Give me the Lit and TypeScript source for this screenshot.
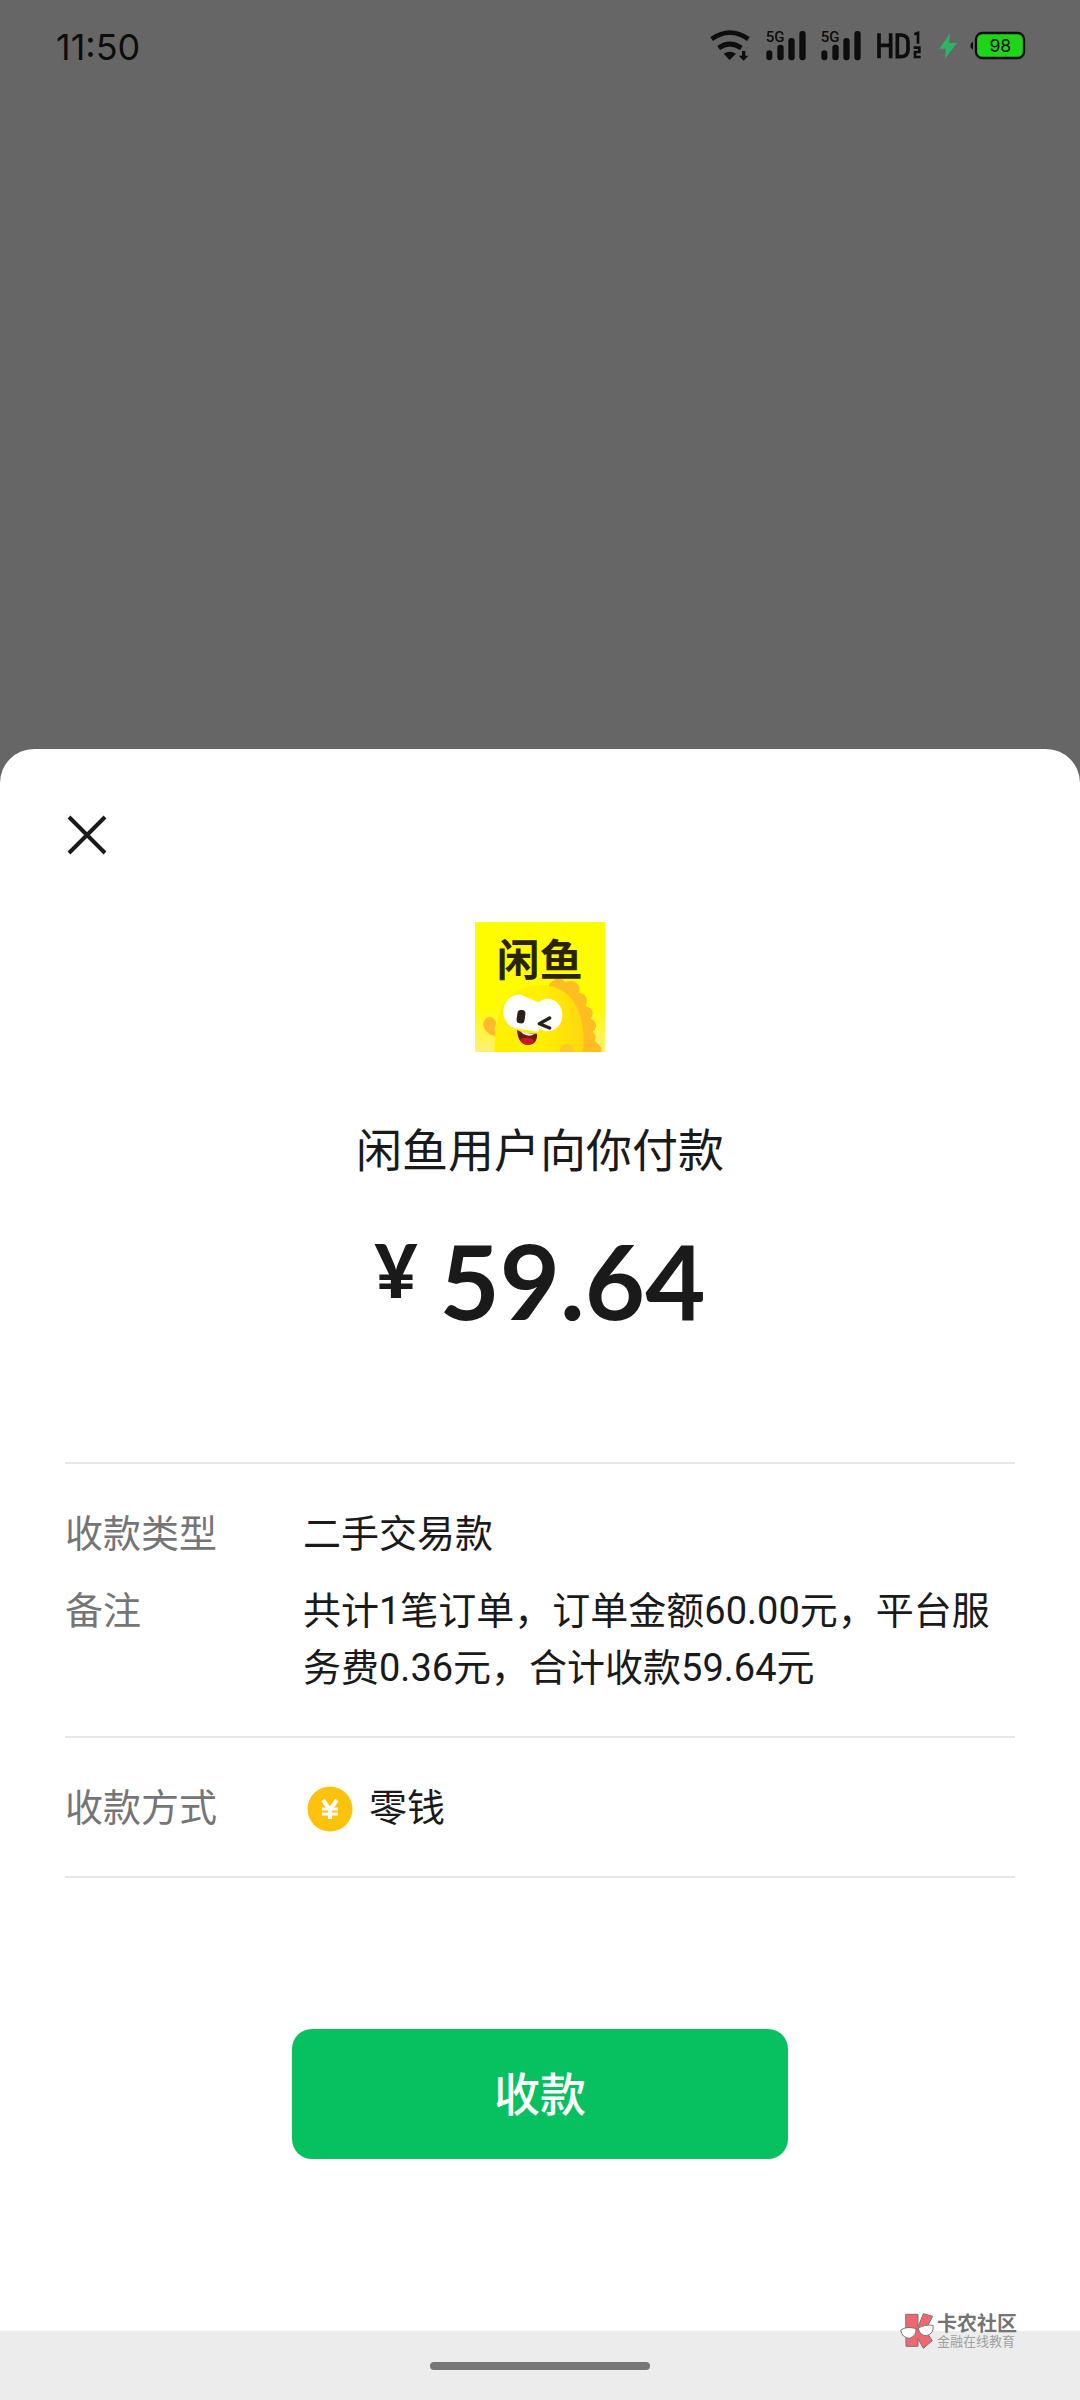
import { LitElement, html, css, svg } from "lit";
import { customElement, property } from "lit/decorators.js";

@customElement("status-bar")
class StatusBar extends LitElement {
  static styles = css`
    :host {
      display: flex;
      align-items: center;
      justify-content: space-between;
      height: 92px;
      padding: 0 54px 0 56px;
      color: #0d0d0d;
    }
    .time {
      padding-top: 2px;
      font: 400 36px/44px Inter, sans-serif;
    }
    .icons {
      display: flex;
      align-items: center;
      gap: 14px;
    }
    svg {
      display: block;
      height: 32px;
      fill: currentColor;
      overflow: visible;
    }
    .wifi { width: 42px; }
    .signal { width: 41px; }
    .hd { width: 48px; }
    .bolt { width: 18px; fill: #2fb465; }
    .battery { width: 56px; }
    .stroke { fill: none; stroke: currentColor; }
    .charge { fill: #1fd51a; stroke: #0d0d0d; }
    .label { font-family: Roboto, sans-serif; font-weight: 500; }
    .level { font-family: Inter, sans-serif; font-weight: 400; }
  `;

  private signal() {
    return html`<svg class="signal" viewBox="225 45 123 96" role="img" aria-label="5G">
      ${svg`<text class="label" x="224" y="81" font-size="45">5G</text>
      <rect x="226" y="106" width="18" height="30" rx="9"/>
      <rect x="259" y="89" width="19" height="47" rx="9"/>
      <rect x="292" y="69" width="19" height="67" rx="9"/>
      <rect x="325" y="48" width="19" height="88" rx="9"/>`}
    </svg>`;
  }

  render() {
    return html`
      <time class="time">11:50</time>
      <div class="icons">
        <svg class="wifi" viewBox="60 45 126 96" aria-hidden="true">
          <path class="stroke" stroke-width="14" d="M65 72Q120 34 175 72" />
          <path class="stroke" stroke-width="14" d="M86 99Q119 75 154 99" />
          <path d="M101 116Q119 105 138 116L119 135Z" />
          <path d="M156 108h10v14h9l-14 15-15-15h10z" />
        </svg>
        ${this.signal()} ${this.signal()}
        <svg class="hd" viewBox="558 45 144 96" role="img" aria-label="HD">
          <path class="stroke" stroke-width="11" d="M567 55V130M602 55V130M567 91H602" />
          <path class="stroke" stroke-width="11" d="M622 60V125H634Q654 124 654 104V81Q654 61 634 60Z" />
          <path class="stroke" stroke-width="8" d="M673 58L684 54V86M671 98H688V111H675V126H692" />
        </svg>
        <svg class="bolt" viewBox="746 45 54 96" aria-hidden="true">
          <path d="M782 55L750 101H770L766 132L803 84H779Z" />
        </svg>
        <svg class="battery" viewBox="840 45 168 96" role="img" aria-label="98%">
          <path d="M849 80V104Q841 101 841 92Q841 83 849 80Z" />
          <rect class="charge" x="858" y="54" width="144" height="75" rx="19" stroke-width="7" />
          <text class="level" x="931" y="112" font-size="53" text-anchor="middle">98</text>
        </svg>
      </div>
    `;
  }
}

@customElement("shop-logo")
class ShopLogo extends LitElement {
  static styles = css`
    :host { display: block; width: 130px; height: 130px; }
    svg { display: block; width: 100%; height: 100%; }
    .name {
      font-family: "Noto Sans CJK SC", sans-serif;
      font-weight: 700;
      fill: #2a2200;
    }
  `;
  render() {
    return html`<svg viewBox="45 36 390 390" role="img" aria-label="闲鱼">
      <defs>
        <linearGradient id="bg" x1="0" y1="0" x2="0" y2="1">
          <stop offset="0.65" stop-color="#fffb00" />
          <stop offset="1" stop-color="#fff078" />
        </linearGradient>
        <linearGradient id="body" x1="0" y1="0" x2="1" y2="0">
          <stop offset="0.5" stop-color="#fff000" />
          <stop offset="1" stop-color="#ffd810" />
        </linearGradient>
      </defs>
      <rect x="45" y="36" width="390" height="390" fill="url(#bg)" />
      <path fill="#ffbd22" d="M262 236Q270 214 288 207Q302 200 316 216Q340 208 352 222Q362 232 358 248Q376 250 380 266Q382 278 376 288Q396 292 398 308Q398 318 392 326Q410 334 408 350Q406 360 398 364Q412 378 404 392Q416 400 424 414L424 426H340Z" />
      <path fill="url(#body)" d="M103 426Q101 330 135 275Q175 226 245 226Q325 228 354 300Q378 360 368 426Z" />
      <path fill="#ffb92e" d="M106 378Q84 374 73 356Q64 338 78 325Q94 315 105 330Q112 340 104 352Z" />
      <path fill="#ffc928" d="M298 426Q300 404 322 402Q340 404 342 426Z" />
      <text class="name" x="110" y="199" font-size="129">闲鱼</text>
      <ellipse cx="175" cy="305" rx="45" ry="51" fill="#fff" />
      <ellipse cx="263" cy="315" rx="44" ry="49" fill="#fff" />
      <path fill="#fff" d="M200 262L242 280L235 366L176 356Z" />
      <rect x="171" y="300" width="24" height="40" rx="11" fill="#2b2118" transform="rotate(8 183 320)" />
      <path d="M269 324L238 341L269 354" fill="none" stroke="#2b2118" stroke-width="10" stroke-linecap="round" stroke-linejoin="round" />
      <path fill="#6d1a10" d="M171 360Q200 374 231 371Q234 403 202 405Q174 402 171 360Z" />
      <path fill="#c81c1c" d="M180 390Q202 374 224 392Q216 405 200 405Q186 402 180 390Z" />
      <path fill="#fff" d="M181 364Q202 373 223 372Q214 379 200 376Q188 373 181 364Z" />
    </svg>`;
  }
}

@customElement("community-mark")
class CommunityMark extends LitElement {
  static styles = css`
    :host {
      display: flex;
      align-items: center;
      gap: 3px;
      font-family: "Noto Sans CJK SC", sans-serif;
    }
    svg { display: block; width: 34px; height: 36px; }
    .words { display: flex; flex-direction: column; }
    .name { font-size: 20px; line-height: 20px; font-weight: 700; color: #747474; }
    .tagline { font-size: 13px; line-height: 16px; color: #a0a0a0; }
  `;
  render() {
    return html`
      <svg viewBox="90 68 102 108" aria-hidden="true">
        <g stroke="#777" stroke-width="3" stroke-linejoin="round">
          <path fill="#f2666f" d="M107 72H144V110L160 70L188 78L166 120L187 151L160 174L144 145V168H108Z" />
          <path fill="#fff" d="M92 119Q113 106 138 115Q140 136 119 144Q96 143 92 119Z" />
          <path fill="#fff" d="M145 114Q163 101 189 105Q193 130 169 136Q149 136 145 114Z" />
          <path fill="none" d="M138 117L145 115" />
        </g>
      </svg>
      <span class="words">
        <span class="name">卡农社区</span>
        <span class="tagline">金融在线教育</span>
      </span>
    `;
  }
}

@customElement("app-root")
class AppRoot extends LitElement {
  @property() amount = "59.64";

  static styles = css`
    :host {
      display: flex;
      flex-direction: column;
      min-height: 100vh;
      background: #666;
      color: #1a1a1a;
      font-family: Roboto, "Noto Sans CJK SC", sans-serif;
    }
    .sheet {
      display: flex;
      flex-direction: column;
      margin-top: auto;
      padding-top: 56px;
      background: #fff;
      border-radius: 34px 34px 0 0;
    }
    button {
      border: 0;
      padding: 0;
      font-family: inherit;
      cursor: pointer;
    }
    .close {
      width: 60px;
      height: 60px;
      margin-left: 57px;
      background: none;
    }
    .close svg {
      display: block;
      width: 60px;
      height: 60px;
      stroke: #1a1a1a;
      stroke-width: 4;
    }
    .payer {
      display: flex;
      flex-direction: column;
      align-items: center;
      padding-top: 57px;
    }
    .title {
      margin: 66px 0 44px;
      font-size: 46px;
      line-height: 66px;
      font-weight: 400;
    }
    .amount {
      display: flex;
      align-items: flex-start;
      gap: 22px;
      margin: 0;
      font-family: Lato, sans-serif;
      font-weight: 700;
      font-size: 104px;
      line-height: 104px;
    }
    .currency {
      font-size: 74px;
      line-height: 84px;
      font-weight: 900;
    }
    .details {
      margin: 130px 65px 151px;
      border-top: 2px solid #e6e6e6;
      font-size: 38px;
      line-height: 57px;
    }
    .group {
      display: flex;
      flex-direction: column;
      gap: 20px;
      margin: 0;
      padding: 42px 0 39px;
      border-bottom: 2px solid #e6e6e6;
    }
    .row {
      display: grid;
      grid-template-columns: 238px 1fr;
    }
    .term { color: #757575; }
    .value { margin: 0; }
    .method {
      display: flex;
      align-items: center;
      gap: 16px;
      padding-left: 4px;
    }
    .coin { display: block; width: 46px; height: 46px; }
    .collect {
      align-self: center;
      width: 46%;
      height: 130px;
      padding-top: 2px;
      border-radius: 20px;
      background: #07c160;
      color: #fff;
      font-size: 46px;
      line-height: 66px;
      font-weight: 500;
    }
    .nav {
      position: relative;
      display: flex;
      justify-content: center;
      align-items: center;
      height: 69px;
      margin-top: 172px;
      background: #ececec;
    }
    .handle {
      width: 220px;
      height: 8px;
      border-radius: 4px;
      background: #777;
    }
    .mark {
      position: absolute;
      right: 63px;
      top: -18px;
    }
  `;

  render() {
    const note = `共计1笔订单，订单金额60.00元，平台服务费0.36元，合计收款${this.amount}元`;
    return html`
      <status-bar></status-bar>
      <main class="sheet">
        <button class="close" aria-label="关闭">
          <svg viewBox="0 0 60 60" aria-hidden="true"><path d="M12 12L48 48M48 12L12 48" /></svg>
        </button>
        <section class="payer">
          <shop-logo></shop-logo>
          <h1 class="title">闲鱼用户向你付款</h1>
          <p class="amount"><span class="currency">¥</span><span>${this.amount}</span></p>
        </section>
        <section class="details">
          <dl class="group">
            <div class="row">
              <dt class="term">收款类型</dt>
              <dd class="value">二手交易款</dd>
            </div>
            <div class="row">
              <dt class="term">备注</dt>
              <dd class="value">${note}</dd>
            </div>
          </dl>
          <dl class="group">
            <div class="row">
              <dt class="term">收款方式</dt>
              <dd class="value method">
                <svg class="coin" viewBox="0 0 46 46" aria-hidden="true">
                  <circle cx="23" cy="23" r="22.5" fill="#fcc20c" />
                  <path fill="none" stroke="#fff" stroke-width="4" d="M16 14L23 24L30 14M23 23V33" />
                  <path fill="none" stroke="#fff" stroke-width="3" d="M15 23H31M15 28H31" />
                </svg>
                <span>零钱</span>
              </dd>
            </div>
          </dl>
        </section>
        <button class="collect">收款</button>
        <footer class="nav">
          <div class="handle"></div>
          <community-mark class="mark"></community-mark>
        </footer>
      </main>
    `;
  }
}
